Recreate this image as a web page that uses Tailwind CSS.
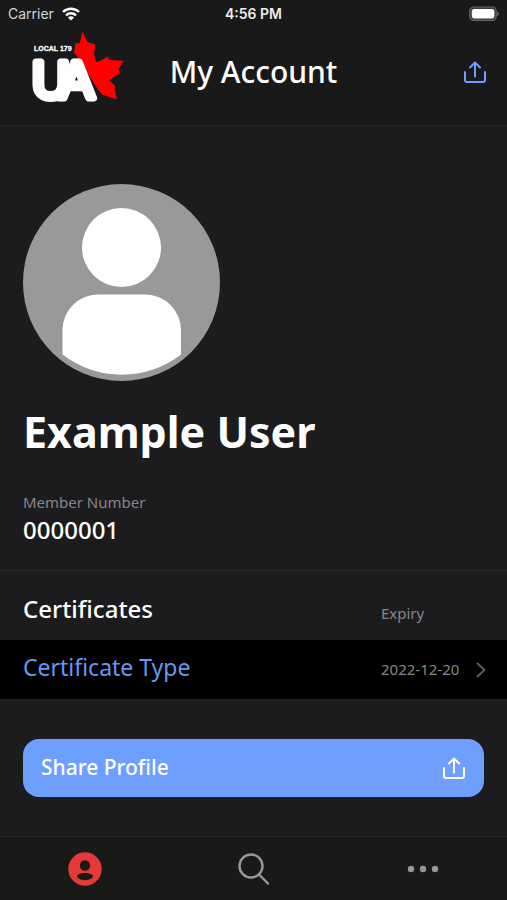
<!DOCTYPE html>
<html lang="en">
<head>
    <meta charset="UTF-8">
    <meta name="viewport" content="width=device-width, initial-scale=1.0">
    <title>My Account</title>
    <script src="https://cdn.jsdelivr.net/npm/@tailwindcss/browser@4"></script>
</head>
<body class="min-h-screen flex flex-col bg-[#1c1c1e] text-white font-['Noto_Sans','Open_Sans',sans-serif]">

    <header class="bg-[#191919] border-b border-[#2a2a2b]">
        <!-- Status bar -->
        <div class="grid grid-cols-3 items-center h-7 px-2 text-sm font-['Inter',sans-serif]">
            <div class="flex items-center gap-2 text-[#d4d4d4]">
                <span>Carrier</span>
                <svg class="w-[18px] h-[14px]" viewBox="0 0 18 14" fill="none" stroke="#fff" stroke-width="2.4">
                    <path d="M1 5a11.5 11.5 0 0 1 16 0"/>
                    <path d="M4 8.3a7.2 7.2 0 0 1 10 0"/>
                    <path d="M9 13.6 5.9 10.5a4.4 4.4 0 0 1 6.2 0z" fill="#fff" stroke="none"/>
                </svg>
            </div>
            <div class="text-center font-semibold text-[#eeeeee]">4:56 PM</div>
            <div class="flex justify-end">
                <svg class="w-[30px] h-4" viewBox="0 0 30 16">
                    <rect x="0.8" y="1" width="26.4" height="13.4" rx="4" fill="#3a3a3a" stroke="#666" stroke-width="1.2"/>
                    <rect x="2.8" y="3" width="22.6" height="9.4" rx="2.4" fill="#fff"/>
                    <path d="M28.4 5.4c1.8.8 1.8 4 0 4.8z" fill="#777"/>
                </svg>
            </div>
        </div>

        <div class="grid grid-cols-[1fr_auto_1fr] items-start h-[97px] px-5">
            <svg class="w-24 h-20 ml-3" viewBox="32 28 96 80" role="img" aria-label="UA Local 179">
                <path fill="#ff0000" d="M82.5 31.7 87 41l1.5 1.5 6.8 2-1.3 9L96 62l3.5-.8 8.5-4.7 1 3.5 14.5.7-5 8.8 1.5 4L109 80l6.7 6.5-1.2 2.5 2.500 10.500-14.500-4.800L98 90 74 54l1.500-11 4 .5z"/>
                <path d="M72 55 98 96" stroke="#191919" stroke-width="7"/>
                <text x="34" y="51" font-family="Liberation Sans Narrow, Liberation Sans, sans-serif" font-size="7" font-weight="700" fill="#fff" stroke="#fff" stroke-width="0.3">LOCAL 179</text>
                <text x="32 59" y="98" font-family="Liberation Sans, sans-serif" font-size="52" fill="#fff" stroke="#fff" stroke-width="7" stroke-linejoin="round">UA</text>
            </svg>
            <h1 class="pt-6 text-[30px] leading-10 font-medium">My Account</h1>
            <button type="button" aria-label="Share" class="justify-self-end mt-8 text-[#6e9fff]">
                <svg class="w-6 h-6" viewBox="0 0 24 24" fill="none" stroke="currentColor" stroke-width="2" stroke-linecap="round" stroke-linejoin="round">
                    <path d="M2 12v8a2 2 0 0 0 2 2h16a2 2 0 0 0 2-2V12"/>
                    <path d="M12 16.5V3M7 7.5 12 2.5l5 5"/>
                </svg>
            </button>
        </div>
    </header>

    <main class="flex-1">
        <section class="px-[23px] pt-[58px] pb-6 border-b border-[#29292b]">
            <svg class="w-[198px] h-[198px]" viewBox="0 0 198 198" role="img" aria-label="Profile picture">
                <circle cx="98.5" cy="98.5" r="98.5" fill="#999"/>
                <circle cx="98.5" cy="63.5" r="39.5" fill="#fff"/>
                <path fill="#fff" d="M39.5 170.5V146a35.5 35.5 0 0 1 35.5-35.5h47.5A35.5 35.5 0 0 1 158 146v24.5a97 97 0 0 1-118.5 0z"/>
            </svg>
            <h2 class="mt-5 text-[43px] leading-[60px] font-bold">Example User</h2>
            <dl class="mt-7">
                <dt class="text-[15px] leading-6 text-[#86868a]">Member Number</dt>
                <dd class="text-2xl leading-8 font-medium">0000001</dd>
            </dl>
        </section>

        <table class="w-full text-left">
            <thead>
                <tr class="h-[69px]">
                    <th scope="col" class="pl-[23px] pt-1.5 text-2xl leading-8 font-medium">Certificates</th>
                    <th scope="col" class="w-[126px] pt-4 text-[15px] font-normal text-[#86868a]">Expiry</th>
                </tr>
            </thead>
            <tbody>
                <tr class="h-[59px] bg-black">
                    <td class="pl-[23px] pb-1.5 text-[23px] leading-8"><a href="#certificate" class="text-[#6797f0]">Certificate Type</a></td>
                    <td class="pr-5">
                        <div class="flex items-center justify-between text-[15px] text-[#86868a]">
                            <span>2022-12-20</span>
                            <svg class="w-3 h-4" viewBox="0 0 12 16" fill="none" stroke="#5c5c60" stroke-width="2" stroke-linecap="round" stroke-linejoin="round">
                                <path d="M2.5 1.5 9.5 8l-7 6.5"/>
                            </svg>
                        </div>
                    </td>
                </tr>
            </tbody>
        </table>

        <div class="px-[23px] pt-10 pb-9">
            <button type="button" class="flex items-center justify-between w-full h-[58px] px-[18px] rounded-2xl bg-[#6e9fff] text-[21px] font-medium">
                <span>Share Profile</span>
                <svg class="w-6 h-6" viewBox="0 0 24 24" fill="none" stroke="currentColor" stroke-width="2" stroke-linecap="round" stroke-linejoin="round">
                    <path d="M2 12v8a2 2 0 0 0 2 2h16a2 2 0 0 0 2-2V12"/>
                    <path d="M12 16.5V3M7 7.5 12 2.5l5 5"/>
                </svg>
            </button>
        </div>
    </main>

    <!-- Tab bar -->
    <nav class="grid grid-cols-3 h-16 bg-[#191918] border-t border-[#272729] text-[#98989a]">
        <a href="#account" aria-label="Account" class="flex items-center justify-center">
            <svg class="w-[34px] h-[34px]" viewBox="0 0 34 34">
                <circle cx="17" cy="17" r="16.7" fill="#e53a3a"/>
                <circle cx="17" cy="13.5" r="5.2" fill="#191918"/>
                <path d="M9 24.5c0-4.8 16-4.8 16 0-2.5 5-13.5 5-16 0z" fill="#191918"/>
            </svg>
        </a>
        <a href="#search" aria-label="Search" class="flex items-center justify-center">
            <svg class="w-8 h-8" viewBox="0 0 32 32" fill="none" stroke="currentColor" stroke-width="2.4" stroke-linecap="round">
                <circle cx="13" cy="13" r="11.5"/>
                <path d="m21 21.5 9 9"/>
            </svg>
        </a>
        <a href="#more" aria-label="More" class="flex items-center justify-center">
            <svg class="w-8 h-8" viewBox="0 0 32 32" fill="currentColor">
                <circle cx="4" cy="16" r="3.2"/>
                <circle cx="16" cy="16" r="3.2"/>
                <circle cx="28" cy="16" r="3.2"/>
            </svg>
        </a>
    </nav>

</body>
</html>
